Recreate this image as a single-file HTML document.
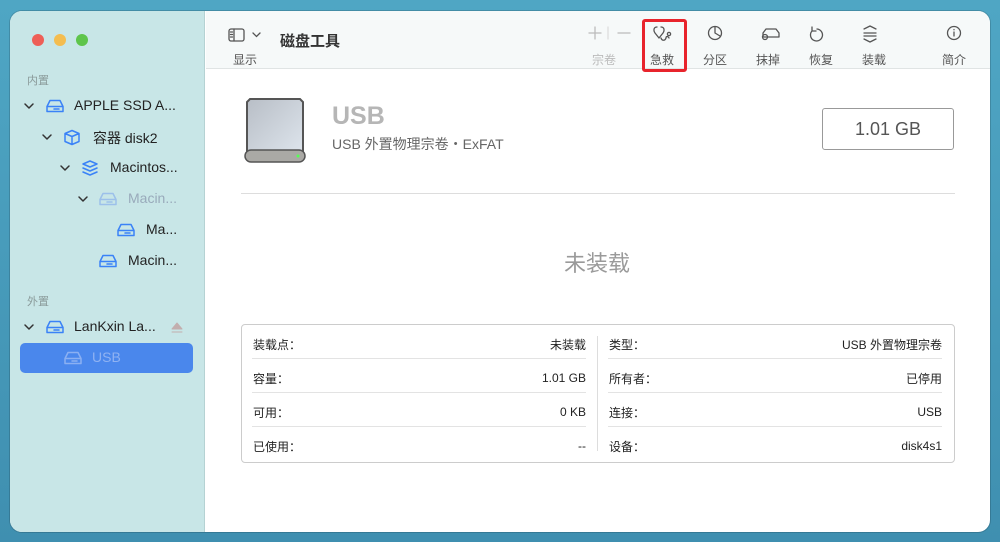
<!DOCTYPE html>
<html><head><meta charset="utf-8"><style>
*{margin:0;padding:0;box-sizing:border-box}
body{width:1000px;height:542px;overflow:hidden;background:linear-gradient(180deg,#4fa6c4,#3f8fb0);font-family:"Liberation Sans","Noto Sans CJK SC",sans-serif;position:relative}
.a{position:absolute;white-space:nowrap}
#win{position:absolute;left:10px;top:11px;width:980px;height:521px;border-radius:12px;overflow:hidden;background:#fff;box-shadow:0 0 0 1px rgba(0,0,0,.15)}
#side{position:absolute;left:0;top:0;width:195px;height:521px;background:#c8e6e7;border-right:1px solid #b5d2d3}
#tb{position:absolute;left:196px;top:0;right:0;height:58px;background:#f6f9f9;border-bottom:1px solid #e0e4e4}
.row{font-size:14px;color:#222}
.lbl{font-size:11px;color:#8a9a9a}
.tl{font-size:12px;color:#555;transform:translateX(-50%)}
.cell{font-size:12px;color:#222}
.hl{position:absolute;height:1px;background:#e3e3e3}
</style></head><body>
<div id="win">
<div id="side">
 <div class="a" style="left:22px;top:23px;width:12px;height:12px;border-radius:50%;background:#ee5f57"></div>
 <div class="a" style="left:44px;top:23px;width:12px;height:12px;border-radius:50%;background:#f4bd4f"></div>
 <div class="a" style="left:66px;top:23px;width:12px;height:12px;border-radius:50%;background:#5ec54b"></div>
 <div class="a lbl" style="left:17px;top:61px">内置</div>
 <div class="a lbl" style="left:17px;top:282px">外置</div>
 <div class="a" style="left:10px;top:332px;width:173px;height:30px;border-radius:5px;background:#4a87ec"></div>
 <svg class="a" style="left:0;top:0" width="195" height="400" fill="none" stroke-linecap="round" stroke-linejoin="round">
  <defs><path id="dr" d="M0 6l3-6h10l3 6v5H0z M0 6h16 M7 8.5h5"/></defs>
  <g stroke="#333" stroke-width="1.5">
   <path d="M15 93l4 4 4-4"/><path d="M33 124l4 4 4-4"/><path d="M51 155l4 4 4-4"/><path d="M69 186l4 4 4-4"/><path d="M15 314l4 4 4-4"/>
  </g>
  <g stroke="#3a82f7" stroke-width="1.5">
   <use href="#dr" transform="translate(37 89.5)"/>
   <path d="M55 122.5l7-3 7 3v8l-7 3-7-3z M55 122.5l7 3 7-3 M62 125.5v8"/>
   <path d="M73 153l7-3 7 3-7 3z M73 157l7 3 7-3 M73 161l7 3 7-3"/>
   <use href="#dr" transform="translate(108 213.5)"/>
   <use href="#dr" transform="translate(90 244.5)"/>
   <use href="#dr" transform="translate(37 310.5)"/>
  </g>
  <use href="#dr" transform="translate(90 182.5)" stroke="#9cc0ea" stroke-width="1.5"/>
  <use href="#dr" transform="translate(55 341.5)" stroke="#8bb0f2" stroke-width="1.5"/>
  <path d="M162 318l5-6 5 6z M162 321h10" stroke="#c2aeae" fill="#c2aeae" stroke-width="1"/>
 </svg>
 <div class="a row" style="left:64px;top:86px">APPLE SSD A...</div>
 <div class="a row" style="left:83px;top:117px">容器 disk2</div>
 <div class="a row" style="left:100px;top:148px">Macintos...</div>
 <div class="a row" style="left:118px;top:179px;color:#9ab">Macin...</div>
 <div class="a row" style="left:136px;top:210px">Ma...</div>
 <div class="a row" style="left:118px;top:241px">Macin...</div>
 <div class="a row" style="left:64px;top:307px">LanKxin La...</div>
 <div class="a row" style="left:82px;top:338px;color:#8fb2f2">USB</div>
</div>
<div id="tb">
 <svg class="a" style="left:22px;top:17px" width="40" height="16" fill="none" stroke="#555" stroke-width="1.3" stroke-linecap="round"><rect x="1" y="1" width="15" height="12" rx="2"/><path d="M6 1v12M2.5 4h2M2.5 6.5h2M2.5 9h2"/><path d="M25 5l3.5 3.5 3.5-3.5"/></svg>
 <div class="a" style="left:27px;top:40px;font-size:12px;color:#555">显示</div>
 <div class="a" style="left:74px;top:19px;font-size:15px;font-weight:bold;color:#333">磁盘工具</div>
 <svg class="a" style="left:370px;top:12px" width="600" height="24" fill="none" stroke="#555" stroke-width="1.3" stroke-linecap="round" stroke-linejoin="round">
  <g stroke="#bbb"><path d="M19 4v12M13 10h12M42 10h12"/><path d="M32 4v12" stroke="#ddd"/></g>
  <path d="M81 4c-3 0-4 3-2 6l4 5 4-5c2-3 1-6-2-6 M85 15c1 3 4 3 5 0 0-2 2-2 3 0"/><circle cx="93" cy="11" r="1.6"/>
  <circle cx="139" cy="10" r="6.5"/><path d="M139 3.5v6.5l5 3"/>
  <path d="M187 14v-4l3-4h10l3 4v4z"/><circle cx="189" cy="14" r="2.5"/>
  <path d="M241 6a6 6 0 1 1-5 2 M236 4v4h4"/>
  <path d="M288 6l6-3 6 3 M288 10h12M288 13h12 M288 16l6 3 6-3"/>
  <circle cx="378" cy="10" r="6.5"/><path d="M378 9v4M378 6.5v.3"/>
 </svg>
 <div class="a tl" style="left:398px;top:40px;color:#bbb">宗卷</div>
 <div class="a tl" style="left:456px;top:40px">急救</div>
 <div class="a tl" style="left:509px;top:40px">分区</div>
 <div class="a tl" style="left:562px;top:40px">抹掉</div>
 <div class="a tl" style="left:615px;top:40px">恢复</div>
 <div class="a tl" style="left:668px;top:40px">装载</div>
 <div class="a tl" style="left:748px;top:40px">简介</div>
 <div class="a" style="left:436px;top:8px;width:45px;height:53px;border:3px solid #e8242c;border-radius:3px"></div>
</div>
<svg class="a" style="left:232px;top:86px" width="66" height="68">
 <defs><linearGradient id="g" x1="0" y1="0" x2="1" y2="1"><stop offset="0" stop-color="#b8bec6"/><stop offset="1" stop-color="#dfe6ee"/></linearGradient></defs>
 <path d="M8 2h50l3 3v55H5V5z" fill="url(#g)" stroke="#555" stroke-width="2"/>
 <rect x="3" y="53" width="60" height="12" rx="6" fill="#aaa9a5" stroke="#555" stroke-width="1.5"/>
 <circle cx="56" cy="59" r="1.5" fill="#5f5"/>
</svg>
<div class="a" style="left:322px;top:91px;font-size:25px;font-weight:bold;color:#b6b6b6">USB</div>
<div class="a" style="left:322px;top:123px;font-size:14px;color:#666">USB 外置物理宗卷・ExFAT</div>
<div class="a" style="left:812px;top:97px;width:132px;height:42px;border:1px solid #999;border-radius:3px;font-size:18px;color:#555;text-align:center;line-height:40px">1.01 GB</div>
<div class="hl" style="left:231px;top:182px;width:714px;background:#ddd"></div>
<div class="a" style="left:587px;top:235px;transform:translateX(-50%);font-size:22px;color:#9a9a9a">未装载</div>
<div class="a" style="left:231px;top:313px;width:714px;height:139px;border:1px solid #ccc;border-radius:4px"></div>
<div class="a" style="left:587px;top:325px;width:1px;height:115px;background:#ddd"></div>
<div class="hl" style="left:242px;top:347px;width:334px"></div><div class="hl" style="left:242px;top:381px;width:334px"></div><div class="hl" style="left:242px;top:415px;width:334px"></div>
<div class="hl" style="left:598px;top:347px;width:334px"></div><div class="hl" style="left:598px;top:381px;width:334px"></div><div class="hl" style="left:598px;top:415px;width:334px"></div>
<div class="a cell" style="left:243px;top:325px">装载点：</div><div class="a cell" style="right:404px;top:325px">未装载</div>
<div class="a cell" style="left:243px;top:359px">容量：</div><div class="a cell" style="right:404px;top:360px">1.01 GB</div>
<div class="a cell" style="left:243px;top:393px">可用：</div><div class="a cell" style="right:404px;top:394px">0 KB</div>
<div class="a cell" style="left:243px;top:427px">已使用：</div><div class="a cell" style="right:404px;top:428px">--</div>
<div class="a cell" style="left:599px;top:325px">类型：</div><div class="a cell" style="right:48px;top:325px">USB 外置物理宗卷</div>
<div class="a cell" style="left:599px;top:359px">所有者：</div><div class="a cell" style="right:48px;top:359px">已停用</div>
<div class="a cell" style="left:599px;top:393px">连接：</div><div class="a cell" style="right:48px;top:394px">USB</div>
<div class="a cell" style="left:599px;top:427px">设备：</div><div class="a cell" style="right:48px;top:428px">disk4s1</div>
</div>
</body></html>
